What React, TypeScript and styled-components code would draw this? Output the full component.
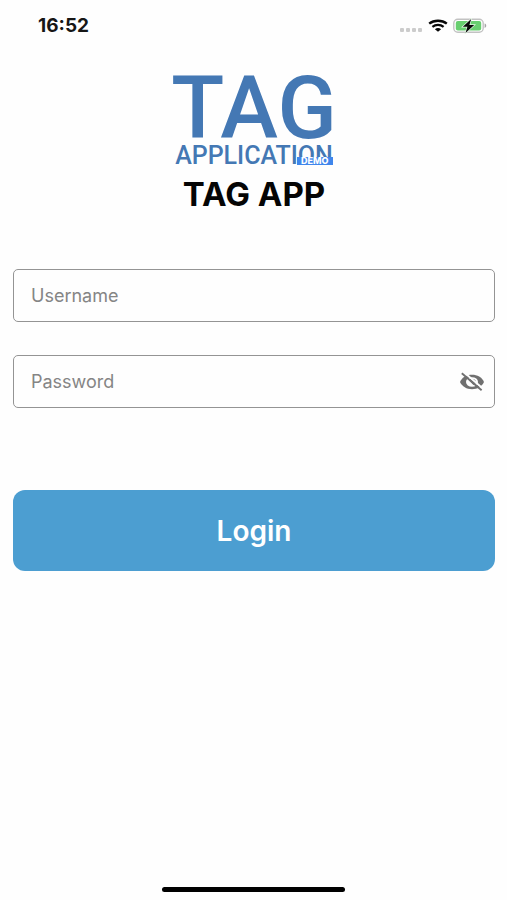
import React, { useState } from "react";
import styled, { createGlobalStyle } from "styled-components";

const GlobalStyle = createGlobalStyle`
  *, *::before, *::after { box-sizing: border-box; }
  body { margin: 0; background: #fefefe; font-family: Inter, "Liberation Sans", sans-serif; }
`;

const Screen = styled.div`
  min-height: 100vh;
  display: flex;
  flex-direction: column;
`;

const StatusBar = styled.header`
  display: flex;
  align-items: center;
  justify-content: space-between;
  height: 52px;
  padding: 0 20px 0 38px;
`;

const Clock = styled.time`
  font-size: 19px;
  font-weight: 700;
  line-height: 24px;
  color: #161616;
`;

const StatusIcons = styled.div`
  display: flex;
  align-items: center;
  gap: 5px;
  svg { display: block; }
`;

const Main = styled.main`
  flex: 1;
  display: flex;
  flex-direction: column;
  align-items: center;
  padding: 20px 12px 0 13px;
`;

const Logo = styled.div`
  position: relative;
  display: flex;
  flex-direction: column;
  align-items: center;
  color: #4478b4;
  font-family: Roboto, sans-serif;
`;

const LogoName = styled.span`
  font-size: 87px;
  font-weight: 500;
  line-height: 72px;
`;

const LogoSubtitle = styled.span`
  font-size: 25px;
  font-weight: 500;
  line-height: 24px;
`;

const DemoBadge = styled.span`
  position: absolute;
  right: 4px;
  bottom: 3px;
  width: 36px;
  height: 8px;
  background: #3f86ec;
  color: #fff;
  font-family: Inter, sans-serif;
  font-size: 9px;
  font-weight: 800;
  line-height: 8px;
  text-align: center;
`;

const Title = styled.h1`
  margin: 8px 0 0;
  font-size: 33px;
  font-weight: 700;
  line-height: 36px;
  color: #050505;
`;

const Form = styled.form`
  align-self: stretch;
  display: flex;
  flex-direction: column;
  gap: 33px;
  margin-top: 57px;
`;

const Field = styled.div`
  display: flex;
  align-items: center;
  height: 53px;
  padding: 0 9px 0 17px;
  border: 1px solid #949494;
  border-radius: 5px;
`;

const TextInput = styled.input`
  flex: 1;
  min-width: 0;
  padding: 0;
  border: 0;
  outline: 0;
  background: transparent;
  font-family: inherit;
  font-size: 18px;
  line-height: 24px;
  color: #222;
  &::placeholder { color: #858585; opacity: 1; }
`;

const IconButton = styled.button`
  display: flex;
  padding: 0;
  border: 0;
  background: none;
  color: #707070;
  cursor: pointer;
`;

const LoginButton = styled.button`
  height: 81px;
  margin-top: 49px;
  border: 0;
  border-radius: 12px;
  background: #4c9ed1;
  color: #fff;
  font-family: inherit;
  font-size: 28px;
  font-weight: 600;
  line-height: 32px;
  cursor: pointer;
`;

const HomeArea = styled.footer`
  display: flex;
  justify-content: center;
  padding-bottom: 8px;
`;

const HomeBar = styled.div`
  width: 36%;
  height: 5px;
  border-radius: 3px;
  background: #000;
`;

const SignalIcon = () => (
  <svg width="24" height="14" viewBox="0 0 24 14" fill="#cccccc" aria-hidden="true">
    {[1, 7, 13, 19].map((x) => (
      <rect key={x} x={x} y="9" width="4" height="4" rx="1" />
    ))}
  </svg>
);

const WifiIcon = () => (
  <svg width="20" height="14" viewBox="0 0 20 14" fill="none" stroke="#080808" aria-hidden="true">
    <path d="M1.2 4.6C6 .7 14 .7 18.8 4.6" strokeWidth="2.4" />
    <path d="M4.4 7.9c3.2-2.6 8-2.6 11.2 0" strokeWidth="2.2" />
    <path d="M6.9 10.2c1.8-1.5 4.4-1.5 6.2 0L10 12.8z" fill="#080808" stroke="none" />
  </svg>
);

const BatteryIcon = () => (
  <svg width="34" height="16" viewBox="0 0 34 16" aria-hidden="true">
    <rect x=".8" y="1.3" width="29.4" height="13" rx="4" fill="#fff" stroke="#c2c2c2" strokeWidth="1.4" />
    <rect x="2.8" y="3" width="25.4" height="9.6" rx="2" fill="#68cf70" />
    <path d="M31.6 5.6c2.2.6 2.2 3.8 0 4.4z" fill="#a5a5a5" />
    <path d="M18.2.9 9.8 8.7h4.6l-1.9 6.2 8.7-7.9h-4.8z" fill="#080808" stroke="#e6f7e6" strokeWidth="1.4" paintOrder="stroke" />
  </svg>
);

const EyeOffIcon = () => (
  <svg width="26" height="20" viewBox="0 0 26 20" aria-hidden="true">
    <path d="M1 10C3.2 5.3 7.6 2.8 13 2.8S22.8 5.3 25 10c-2.2 4.7-6.6 7.2-12 7.2S3.2 14.7 1 10z" fill="currentColor" />
    <ellipse cx="13" cy="10" rx="6" ry="4.8" fill="#fefefe" />
    <path d="M13 6.8c2.2 0 4 1.4 4 3.2 0 1.6-1.3 2.6-2.6 3L10 8.2c.6-.9 1.6-1.4 3-1.4z" fill="currentColor" />
    <path d="M4.6 0 24.4 17" stroke="#fefefe" strokeWidth="2" />
    <path d="M2.8 1.3 22.6 18.3" stroke="currentColor" strokeWidth="1.9" />
  </svg>
);

export default function App() {
  const [visible, setVisible] = useState(false);

  return (
    <>
      <GlobalStyle />
      <Screen>
        <StatusBar>
          <Clock>16:52</Clock>
          <StatusIcons>
            <SignalIcon />
            <WifiIcon />
            <BatteryIcon />
          </StatusIcons>
        </StatusBar>
        <Main>
          <Logo>
            <LogoName>TAG</LogoName>
            <LogoSubtitle>APPLICATION</LogoSubtitle>
            <DemoBadge>DEMO</DemoBadge>
          </Logo>
          <Title>TAG APP</Title>
          <Form onSubmit={(event) => event.preventDefault()}>
            <Field>
              <TextInput aria-label="Username" placeholder="Username" autoComplete="username" />
            </Field>
            <Field>
              <TextInput
                aria-label="Password"
                placeholder="Password"
                type={visible ? "text" : "password"}
                autoComplete="current-password"
              />
              <IconButton
                type="button"
                aria-label={visible ? "Hide password" : "Show password"}
                onClick={() => setVisible(!visible)}
              >
                <EyeOffIcon />
              </IconButton>
            </Field>
            <LoginButton type="submit">Login</LoginButton>
          </Form>
        </Main>
        <HomeArea>
          <HomeBar />
        </HomeArea>
      </Screen>
    </>
  );
}
